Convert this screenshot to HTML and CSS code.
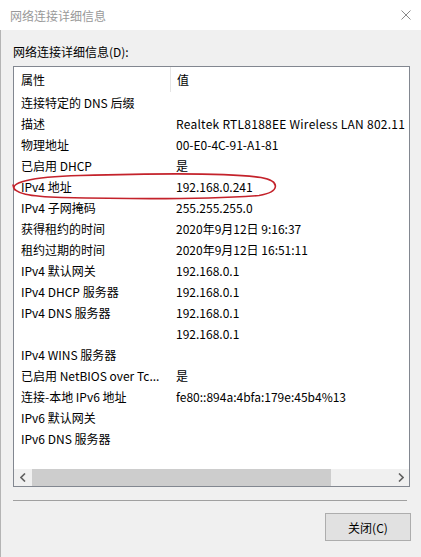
FILE: index.html
```html
<!DOCTYPE html>
<html lang="zh-CN">
<head>
    <meta charset="UTF-8">
    <meta name="viewport" content="width=device-width, initial-scale=1.0">
    <title>网络连接详细信息</title>
    <link rel="stylesheet" href="styles.css">
</head>
<body>
    <div class="window">
        <div class="titlebar">
            <span class="title">网络连接详细信息</span>
            <svg class="close" width="10" height="10" viewBox="0 0 10 10">
                <path d="M0.5 0.5 L9.5 9.5 M9.5 0.5 L0.5 9.5" stroke="#8a8a8a" stroke-width="1" fill="none"/>
            </svg>
        </div>

        <div class="content">
            <div class="label">网络连接详细信息(D):</div>

            <div class="listview">
                <div class="list-header">
                    <div class="col-name">属性</div>
                    <div class="col-value">值</div>
                </div>
                <div class="list-body">
                    <div class="row"><div class="col-name">连接特定的 DNS 后缀</div><div class="col-value"></div></div>
                    <div class="row"><div class="col-name">描述</div><div class="col-value wide">Realtek RTL8188EE Wireless LAN 802.11</div></div>
                    <div class="row"><div class="col-name">物理地址</div><div class="col-value">00-E0-4C-91-A1-81</div></div>
                    <div class="row"><div class="col-name">已启用 DHCP</div><div class="col-value">是</div></div>
                    <div class="row"><div class="col-name">IPv4 地址</div><div class="col-value">192.168.0.241</div></div>
                    <div class="row"><div class="col-name">IPv4 子网掩码</div><div class="col-value">255.255.255.0</div></div>
                    <div class="row"><div class="col-name">获得租约的时间</div><div class="col-value">2020年9月12日 9:16:37</div></div>
                    <div class="row"><div class="col-name">租约过期的时间</div><div class="col-value">2020年9月12日 16:51:11</div></div>
                    <div class="row"><div class="col-name">IPv4 默认网关</div><div class="col-value">192.168.0.1</div></div>
                    <div class="row"><div class="col-name">IPv4 DHCP 服务器</div><div class="col-value">192.168.0.1</div></div>
                    <div class="row"><div class="col-name">IPv4 DNS 服务器</div><div class="col-value">192.168.0.1</div></div>
                    <div class="row"><div class="col-name"></div><div class="col-value">192.168.0.1</div></div>
                    <div class="row"><div class="col-name">IPv4 WINS 服务器</div><div class="col-value"></div></div>
                    <div class="row"><div class="col-name">已启用 NetBIOS over Tc...</div><div class="col-value">是</div></div>
                    <div class="row"><div class="col-name">连接-本地 IPv6 地址</div><div class="col-value">fe80::894a:4bfa:179e:45b4%13</div></div>
                    <div class="row"><div class="col-name">IPv6 默认网关</div><div class="col-value"></div></div>
                    <div class="row"><div class="col-name">IPv6 DNS 服务器</div><div class="col-value"></div></div>
                </div>
                <div class="hscroll">
                    <div class="arrow">
                        <svg width="6" height="9" viewBox="0 0 6 9"><path d="M5 0.5 L1 4.5 L5 8.5" stroke="#606060" stroke-width="1.6" fill="none"/></svg>
                    </div>
                    <div class="track">
                        <div class="thumb"></div>
                    </div>
                    <div class="arrow">
                        <svg width="6" height="9" viewBox="0 0 6 9"><path d="M1 0.5 L5 4.5 L1 8.5" stroke="#606060" stroke-width="1.6" fill="none"/></svg>
                    </div>
                </div>
            </div>

            <div class="separator"></div>

            <div class="buttons">
                <button class="btn">关闭(C)</button>
            </div>
        </div>

        <!-- red pen mark around the IPv4 row -->
        <svg class="mark" width="421" height="557" viewBox="0 0 421 557">
            <path d="M15 190 C9 183 28 177 80 175.5 C150 173.5 228 172.5 261 177.5 C281 181 280 192 259 195.5 C205 199.5 125 199 62 197.5 C30 196.5 13 194 13 185"
                  stroke="#c4222b" stroke-width="1.6" fill="none" stroke-linecap="round"/>
        </svg>
    </div>
</body>
</html>
```

FILE: styles.css
```css
body {
    margin: 0;
    padding: 0;
    background-color: #f0f0f0;
    font-family: "Noto Sans CJK SC", "Noto Sans", sans-serif;
    font-size: 12px;
    color: #000;
}
.window {
    position: relative;
    width: 421px;
    height: 557px;
    overflow: hidden;
}
.titlebar {
    height: 30px;
    background: white;
    display: flex;
    align-items: center;
    justify-content: space-between;
    padding: 0 10px 0 10px;
}
.title {
    color: #999;
    font-size: 12px;
}
.content {
    height: 527px;
    border-left: 1px solid #b4b4b4;
    padding: 0 11px 0 12px;
    display: flex;
    flex-direction: column;
}
.label {
    height: 20px;
    line-height: 20px;
    margin-top: 12px;
    margin-bottom: 4px;
}
.listview {
    height: 419px;
    border: 1px solid #828790;
    background: white;
    display: flex;
    flex-direction: column;
    overflow: hidden;
}
.list-header {
    display: flex;
    height: 25px;
    line-height: 25px;
    flex-shrink: 0;
}
.list-header .col-name {
    border-right: 1px solid #e5e5e5;
}
.list-body {
    flex-grow: 1;
}
.row {
    display: flex;
    height: 21px;
    line-height: 21px;
}
.col-name {
    width: 149px;
    padding-left: 7px;
    flex-shrink: 0;
    white-space: nowrap;
    overflow: hidden;
}
.col-value {
    padding-left: 6px;
    white-space: nowrap;
}
.col-value.wide {
    letter-spacing: 0.25px;
}
.hscroll {
    height: 17px;
    display: flex;
    background: #f0f0f0;
    flex-shrink: 0;
}
.arrow {
    width: 17px;
    display: flex;
    align-items: center;
    justify-content: center;
    flex-shrink: 0;
}
.track {
    flex-grow: 1;
    display: flex;
}
.thumb {
    width: 299px;
    background: #cdcdcd;
    margin: 0 0 0 1px;
}
.separator {
    height: 1px;
    background: #a0a0a0;
    margin: 13px 3px 0 0;
}
.buttons {
    display: flex;
    justify-content: flex-end;
    margin-top: 12px;
}
.btn {
    width: 86px;
    height: 28px;
    background: #e1e1e1;
    border: 1px solid #adadad;
    font-family: "Noto Sans CJK SC", "Noto Sans", sans-serif;
    font-size: 12px;
    color: #000;
    padding: 0;
    margin-right: -1px;
}
.mark {
    position: absolute;
    left: 0;
    top: 0;
    pointer-events: none;
}
```
